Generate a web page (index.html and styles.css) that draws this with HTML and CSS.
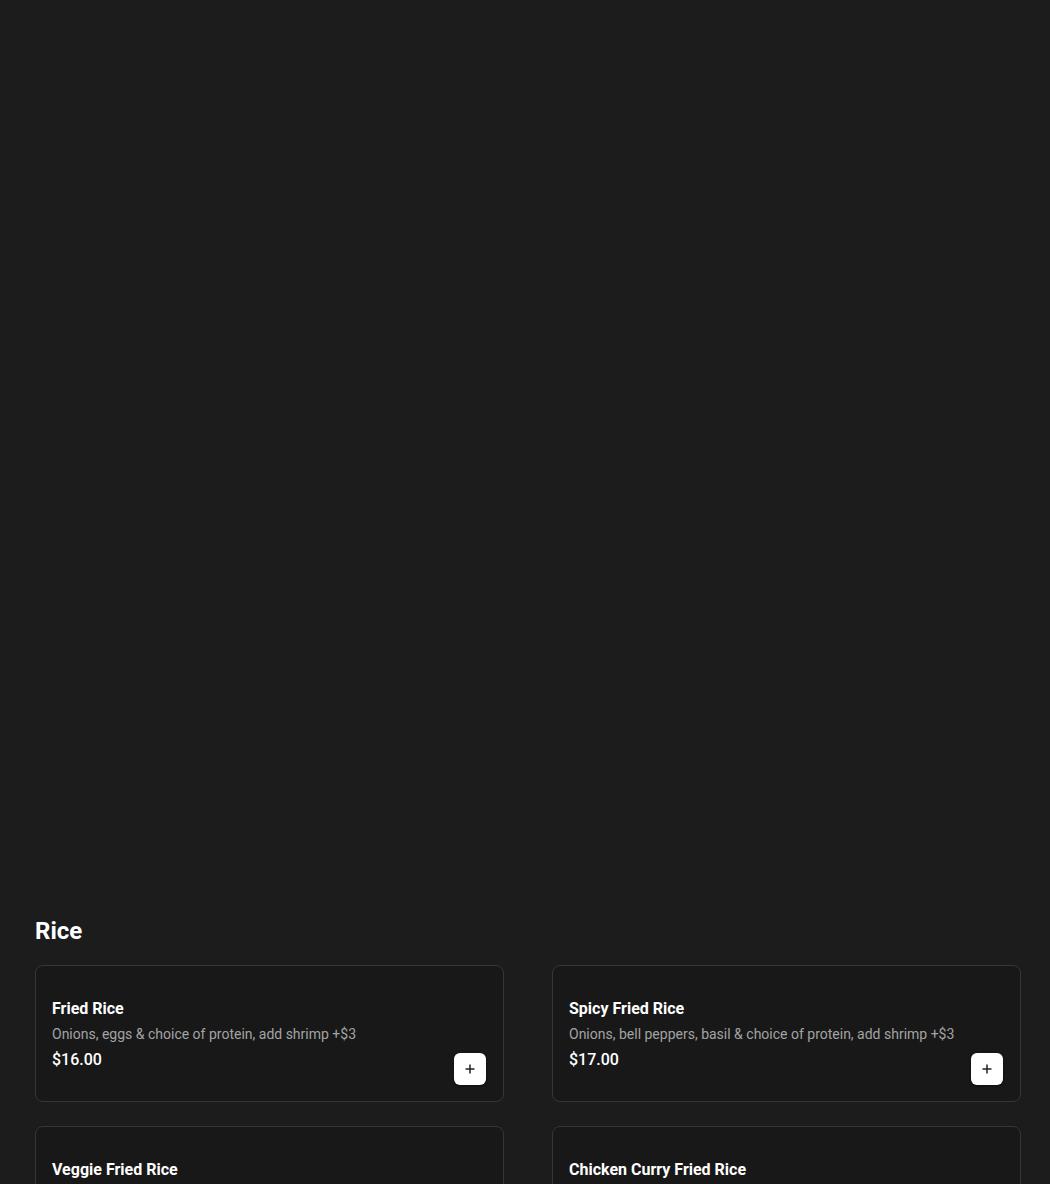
FILE: index.html
```html
<!DOCTYPE html>
<html lang="en">
<head>
<meta charset="utf-8">
<title>Menu</title>
<link rel="stylesheet" href="styles.css">
</head>
<body>
<div class="hero"></div>
<section class="category">
  <h2 class="category-title">Rice</h2>
  <div class="grid">
    <div class="card">
      <div class="info">
        <div class="name">Fried Rice</div>
        <div class="desc">Onions, eggs &amp; choice of protein, add shrimp +$3</div>
        <div class="price">$16.00</div>
      </div>
      <button class="add" aria-label="Add"><svg viewBox="0 0 12 12" width="12" height="12"><path d="M6 1.5v9M1.5 6h9" stroke="#222" stroke-width="1.5" fill="none"/></svg></button>
    </div>
    <div class="card">
      <div class="info">
        <div class="name">Spicy Fried Rice</div>
        <div class="desc">Onions, bell peppers, basil &amp; choice of protein, add shrimp +$3</div>
        <div class="price">$17.00</div>
      </div>
      <button class="add" aria-label="Add"><svg viewBox="0 0 12 12" width="12" height="12"><path d="M6 1.5v9M1.5 6h9" stroke="#222" stroke-width="1.5" fill="none"/></svg></button>
    </div>
    <div class="card">
      <div class="info">
        <div class="name">Veggie Fried Rice</div>
        <div class="desc">Onions, eggs, mixed vegetables &amp; tofu</div>
        <div class="price">$15.00</div>
      </div>
      <button class="add" aria-label="Add"><svg viewBox="0 0 12 12" width="12" height="12"><path d="M6 1.5v9M1.5 6h9" stroke="#222" stroke-width="1.5" fill="none"/></svg></button>
    </div>
    <div class="card">
      <div class="info">
        <div class="name">Chicken Curry Fried Rice</div>
        <div class="desc">Curry powder, onions, eggs &amp; chicken</div>
        <div class="price">$17.00</div>
      </div>
      <button class="add" aria-label="Add"><svg viewBox="0 0 12 12" width="12" height="12"><path d="M6 1.5v9M1.5 6h9" stroke="#222" stroke-width="1.5" fill="none"/></svg></button>
    </div>
  </div>
</section>
</body>
</html>
```

FILE: styles.css
```css
* { box-sizing: border-box; }
html, body { margin: 0; padding: 0; }
body {
  background: #1c1c1c;
  color: #fff;
  font-family: Roboto, "Liberation Sans", sans-serif;
}
.hero { height: 915px; }
.category { padding: 0 29px 40px 35px; }
.category-title {
  margin: 0 0 18px;
  font-size: 24px;
  line-height: 32px;
  font-weight: 700;
}
.grid {
  display: grid;
  grid-template-columns: 469px 469px;
  column-gap: 48px;
  row-gap: 24px;
}
.card {
  position: relative;
  background: #181818;
  border: 1px solid #363636;
  border-radius: 8px;
  padding: 31px 16px 29px;
}
.info { display: flex; flex-direction: column; }
.name { font-size: 16px; line-height: 24px; font-weight: 700; }
.desc { font-size: 14px; line-height: 20px; color: #a3a3a3; margin-top: 3px; }
.price { font-size: 16px; line-height: 24px; font-weight: 500; margin-top: 4px; }
.add {
  position: absolute;
  right: 17px;
  bottom: 16px;
  width: 32px;
  height: 32px;
  border: none;
  border-radius: 6px;
  background: #fff;
  box-shadow: 0 1px 3px rgba(0,0,0,0.5);
  display: flex;
  align-items: center;
  justify-content: center;
  padding: 0;
  cursor: pointer;
}
.add svg { display: block; }
```
